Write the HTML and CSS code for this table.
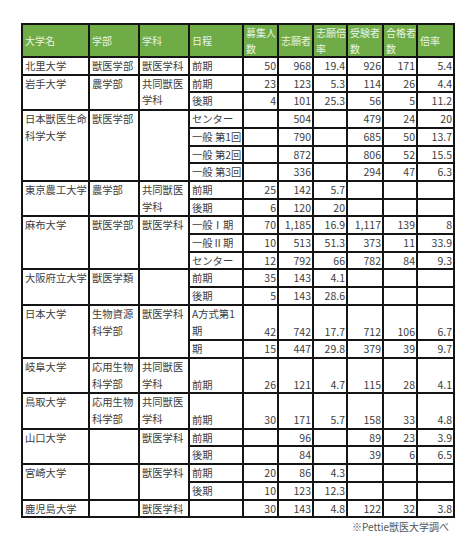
FILE: index.html
```html
<!DOCTYPE html>
<html lang="ja">
<head>
<meta charset="utf-8">
<title>獣医大学 入試結果</title>
<link rel="stylesheet" href="styles.css">
</head>
<body>
<div class="wrap">
<table class="grid">
<colgroup>
<col class="c-name"><col class="c-fac"><col class="c-dep"><col class="c-sch">
<col class="c-n1"><col class="c-n2"><col class="c-n3"><col class="c-n4"><col class="c-n5"><col class="c-n6">
</colgroup>
<thead>
<tr class="head">
<th>大学名</th><th>学部</th><th>学科</th><th>日程</th><th>募集人<br>数</th><th>志願者</th><th>志願倍<br>率</th><th>受験者<br>数</th><th>合格者<br>数</th><th>倍率</th>
</tr>
</thead>
<tbody>
<tr><td class="t">北里大学</td><td class="t">獣医学部</td><td class="t">獣医学科</td><td>前期</td><td class="n">50</td><td class="n">968</td><td class="n">19.4</td><td class="n">926</td><td class="n">171</td><td class="n">5.4</td></tr>

<tr><td class="t" rowspan="2">岩手大学</td><td class="t" rowspan="2">農学部</td><td class="t w" rowspan="2">共同獣医<br>学科</td><td>前期</td><td class="n">23</td><td class="n">123</td><td class="n">5.3</td><td class="n">114</td><td class="n">26</td><td class="n">4.4</td></tr>
<tr><td>後期</td><td class="n">4</td><td class="n">101</td><td class="n">25.3</td><td class="n">56</td><td class="n">5</td><td class="n">11.2</td></tr>

<tr><td class="t w" rowspan="4">日本獣医生命<br>科学大学</td><td class="t" rowspan="4">獣医学部</td><td class="t" rowspan="4"></td><td>センター</td><td class="n"></td><td class="n">504</td><td class="n"></td><td class="n">479</td><td class="n">24</td><td class="n">20</td></tr>
<tr><td>一般 第1回</td><td class="n"></td><td class="n">790</td><td class="n"></td><td class="n">685</td><td class="n">50</td><td class="n">13.7</td></tr>
<tr><td>一般 第2回</td><td class="n"></td><td class="n">872</td><td class="n"></td><td class="n">806</td><td class="n">52</td><td class="n">15.5</td></tr>
<tr><td>一般 第3回</td><td class="n"></td><td class="n">336</td><td class="n"></td><td class="n">294</td><td class="n">47</td><td class="n">6.3</td></tr>

<tr><td class="t" rowspan="2">東京農工大学</td><td class="t" rowspan="2">農学部</td><td class="t w" rowspan="2">共同獣医<br>学科</td><td>前期</td><td class="n">25</td><td class="n">142</td><td class="n">5.7</td><td class="n"></td><td class="n"></td><td class="n"></td></tr>
<tr><td>後期</td><td class="n">6</td><td class="n">120</td><td class="n">20</td><td class="n"></td><td class="n"></td><td class="n"></td></tr>

<tr><td class="t" rowspan="3">麻布大学</td><td class="t" rowspan="3">獣医学部</td><td class="t" rowspan="3">獣医学科</td><td>一般Ⅰ期</td><td class="n">70</td><td class="n">1,185</td><td class="n">16.9</td><td class="n">1,117</td><td class="n">139</td><td class="n">8</td></tr>
<tr><td>一般Ⅱ期</td><td class="n">10</td><td class="n">513</td><td class="n">51.3</td><td class="n">373</td><td class="n">11</td><td class="n">33.9</td></tr>
<tr><td>センター</td><td class="n">12</td><td class="n">792</td><td class="n">66</td><td class="n">782</td><td class="n">84</td><td class="n">9.3</td></tr>

<tr><td class="t" rowspan="2">大阪府立大学</td><td class="t" rowspan="2">獣医学類</td><td class="t" rowspan="2"></td><td>前期</td><td class="n">35</td><td class="n">143</td><td class="n">4.1</td><td class="n"></td><td class="n"></td><td class="n"></td></tr>
<tr><td>後期</td><td class="n">5</td><td class="n">143</td><td class="n">28.6</td><td class="n"></td><td class="n"></td><td class="n"></td></tr>

<tr class="dbl"><td class="t" rowspan="2">日本大学</td><td class="t w" rowspan="2">生物資源<br>科学部</td><td class="t" rowspan="2">獣医学科</td><td class="t w">A方式第1<br>期</td><td class="n">42</td><td class="n">742</td><td class="n">17.7</td><td class="n">712</td><td class="n">106</td><td class="n">6.7</td></tr>
<tr><td>期</td><td class="n">15</td><td class="n">447</td><td class="n">29.8</td><td class="n">379</td><td class="n">39</td><td class="n">9.7</td></tr>

<tr class="dbl"><td class="t">岐阜大学</td><td class="t w">応用生物<br>科学部</td><td class="t w">共同獣医<br>学科</td><td class="b">前期</td><td class="n">26</td><td class="n">121</td><td class="n">4.7</td><td class="n">115</td><td class="n">28</td><td class="n">4.1</td></tr>

<tr class="dbl"><td class="t">鳥取大学</td><td class="t w">応用生物<br>科学部</td><td class="t w">共同獣医<br>学科</td><td class="b">前期</td><td class="n">30</td><td class="n">171</td><td class="n">5.7</td><td class="n">158</td><td class="n">33</td><td class="n">4.8</td></tr>

<tr><td class="t" rowspan="2">山口大学</td><td class="t" rowspan="2"></td><td class="t" rowspan="2">獣医学科</td><td>前期</td><td class="n"></td><td class="n">96</td><td class="n"></td><td class="n">89</td><td class="n">23</td><td class="n">3.9</td></tr>
<tr><td>後期</td><td class="n"></td><td class="n">84</td><td class="n"></td><td class="n">39</td><td class="n">6</td><td class="n">6.5</td></tr>

<tr><td class="t" rowspan="2">宮崎大学</td><td class="t" rowspan="2"></td><td class="t" rowspan="2">獣医学科</td><td>前期</td><td class="n">20</td><td class="n">86</td><td class="n">4.3</td><td class="n"></td><td class="n"></td><td class="n"></td></tr>
<tr><td>後期</td><td class="n">10</td><td class="n">123</td><td class="n">12.3</td><td class="n"></td><td class="n"></td><td class="n"></td></tr>

<tr><td class="t">鹿児島大学</td><td class="t"></td><td class="t">獣医学科</td><td></td><td class="n">30</td><td class="n">143</td><td class="n">4.8</td><td class="n">122</td><td class="n">32</td><td class="n">3.8</td></tr>
</tbody>
</table>
<p class="note">※Pettie獣医大学調べ</p>
</div>
</body>
</html>
```

FILE: styles.css
```css
html, body {
  margin: 0;
  padding: 0;
  background: #ffffff;
}

body {
  font-family: "Noto Sans CJK JP", "Noto Sans", sans-serif;
  color: #3d3d3d;
}

.wrap {
  width: 432px;
  padding: 23px 0 0 21px;
}

.grid {
  border-collapse: collapse;
  table-layout: fixed;
  width: 432px;
  font-size: 10.3px;
}

.c-name { width: 67px; }
.c-fac { width: 50px; }
.c-dep { width: 50px; }
.c-sch { width: 54px; }
.c-n1 { width: 35px; }
.c-n2 { width: 35px; }
.c-n3 { width: 34px; }
.c-n4 { width: 36px; }
.c-n5 { width: 34px; }
.c-n6 { width: 37px; }

.grid th,
.grid td {
  border: 2px solid #151515;
  padding: 0 1px 0 2px;
  white-space: nowrap;
  overflow: hidden;
  line-height: 15.7px;
  vertical-align: bottom;
  text-align: left;
  font-weight: normal;
}

.grid tbody tr {
  height: 17.7px;
}

.grid tbody tr.dbl {
  height: 35.4px;
}

.head {
  height: 33px;
}

.grid th {
  background: #6fab46;
  color: #eaf4e2;
  line-height: 15.5px;
  vertical-align: middle;
  font-size: 10px;
}

.grid td.t {
  vertical-align: top;
}

.grid td.w {
  line-height: 16.7px;
}

.grid td.b {
  vertical-align: bottom;
}

.grid td.n {
  text-align: right;
  padding: 0 1px 0 0;
  font-size: 10.5px;
}

.note {
  margin: 2px 0 0 0;
  padding-right: 4px;
  text-align: right;
  font-size: 10px;
  line-height: 14px;
  color: #555555;
}
```
